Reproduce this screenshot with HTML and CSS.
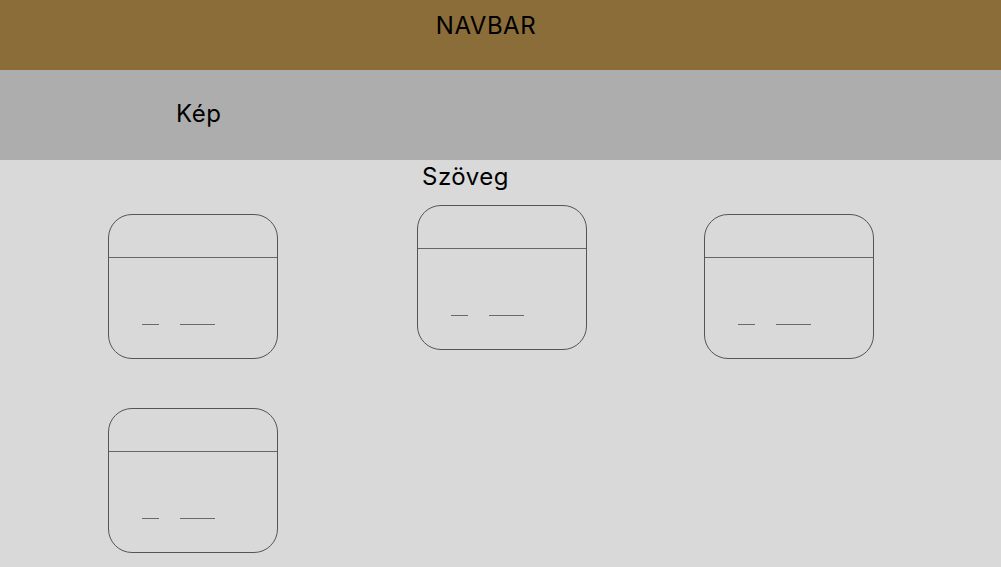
FILE: index.html
```html
<!DOCTYPE html>
<html lang="hu">
<head>
<meta charset="utf-8">
<title>Oldal</title>
<link rel="stylesheet" href="styles.css">
</head>
<body>
<header class="navbar">NAVBAR</header>
<section class="hero">Kép</section>
<main class="content">
  <h2 class="title">Szöveg</h2>
  <div class="cards">
    <div class="card card-low"><div class="card-head"></div><div class="card-body"><span class="dash short"></span><span class="dash long"></span></div></div>
    <div class="card"><div class="card-head"></div><div class="card-body"><span class="dash short"></span><span class="dash long"></span></div></div>
    <div class="card card-low"><div class="card-head"></div><div class="card-body"><span class="dash short"></span><span class="dash long"></span></div></div>
    <div class="card"><div class="card-head"></div><div class="card-body"><span class="dash short"></span><span class="dash long"></span></div></div>
  </div>
</main>
</body>
</html>
```
FILE: styles.css
```css
html, body {
  margin: 0;
  padding: 0;
}
body {
  font-family: Inter, "Noto Sans", sans-serif;
  background: #d9d9d9;
  color: #000;
  min-height: 567px;
}
.navbar {
  height: 70px;
  box-sizing: border-box;
  background: #8b6d3a;
  font-size: 24px;
  line-height: 29px;
  letter-spacing: 0.5px;
  padding: 11px 29px 0 0;
  text-align: center;
}
.hero {
  height: 90px;
  box-sizing: border-box;
  background: #adadad;
  font-size: 24px;
  line-height: 29px;
  letter-spacing: 0.5px;
  padding: 29px 0 0 176px;
}
.content {
  padding: 2px 0 0 0;
}
.title {
  margin: 0;
  font-weight: 400;
  font-size: 24px;
  line-height: 29px;
  letter-spacing: 0.5px;
  padding-left: 422px;
}
.cards {
  display: grid;
  grid-template-columns: 309px 287px 170px;
  row-gap: 49px;
  align-items: start;
  padding-left: 108px;
  margin-top: 14px;
}
.card {
  width: 170px;
  height: 145px;
  box-sizing: border-box;
  border: 1px solid #555;
  border-radius: 24px;
  display: flex;
  flex-direction: column;
}
.card-low {
  margin-top: 9px;
}
.card-head {
  height: 42px;
  border-bottom: 1px solid #666;
}
.card-body {
  display: flex;
  gap: 21px;
  padding: 66px 0 0 33px;
}
.dash {
  display: block;
  height: 1px;
  background: #6a6a6a;
}
.dash.short { width: 17px; }
.dash.long { width: 35px; }
```
